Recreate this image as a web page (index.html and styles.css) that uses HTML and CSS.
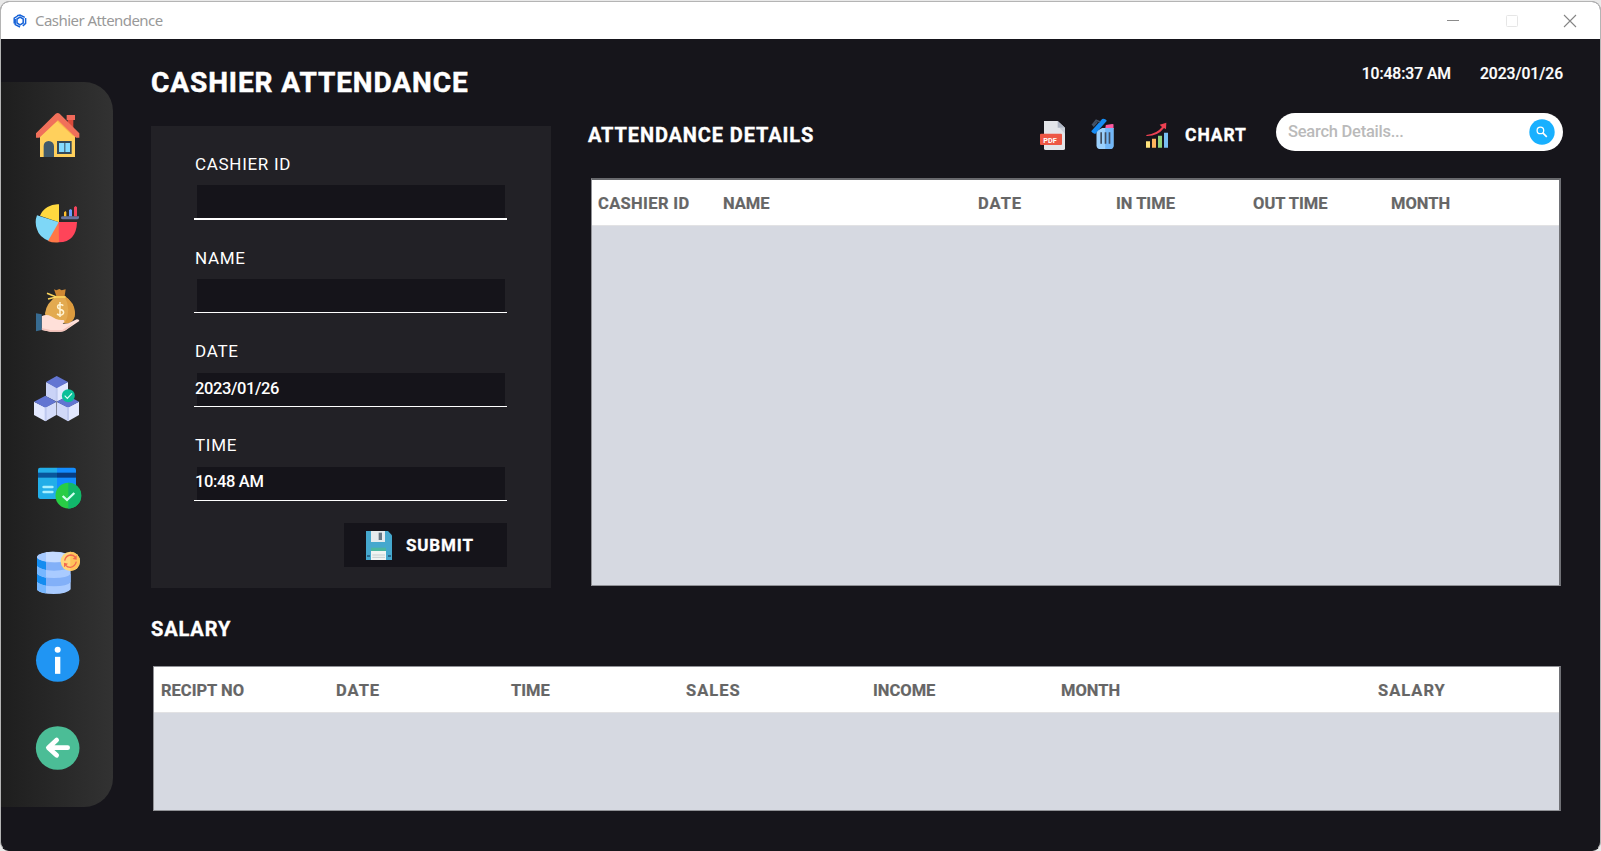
FILE: index.html
```html
<!DOCTYPE html>
<html lang="en">
<head>
<meta charset="utf-8">
<title>Cashier Attendence</title>
<link rel="stylesheet" href="styles.css">
</head>
<body>
<div class="window">
  <header class="titlebar">
    <svg class="app-icon" viewBox="0 0 14 14"><path d="M4.2 1.8 7 1l4.8 2.4M12.6 4v5.4L9.8 12M7 13l-4.8-2.4V5M1.2 9.4V4.2L4.5 2M4 5l3-1.8L10.2 5v4L7 10.8 4 9z" fill="none" stroke="#1763d8" stroke-width="1.5"/></svg>
    <span class="app-name">Cashier Attendence</span>
    <div class="controls">
      <svg viewBox="0 0 12 12"><path d="M0 5.5h12" stroke="#8b8b8b"/></svg>
      <svg viewBox="0 0 12 12"><rect x=".5" y=".5" width="11" height="11" rx="1" fill="none" stroke="#e6e6e6"/></svg>
      <svg viewBox="0 0 12 12"><path d="M0 0l12 12M12 0L0 12" stroke="#858585" stroke-width="1.1"/></svg>
    </div>
  </header>
  <div class="content">
    <nav class="sidebar">
      <svg viewBox="108 69 132 132">
        <path d="M203 88h17v28l-17-16z" fill="#d94a3b"/><path d="M200 75h25v15h-25z" fill="#f0695a"/>
        <path d="M120 132l53-48 52 48v69H120z" fill="#ffd05c"/>
        <path d="M173 92l48 44" stroke="#f9b54c" stroke-width="5"/>
        <path d="M108 130l59-59q6-4 12 0l59 59v13h-10l-54-52-56 52h-10z" fill="#f0705a"/>
        <path d="M131 201v-33q0-14 15-15 15 1 16 15v33z" fill="#40596b"/>
        <path d="M171 153h44v39h-44z" fill="#344a5a"/><path d="M177 159h33v27h-33z" fill="#84dbff"/><path d="M193 158h3v29h-3z" fill="#344a5a"/>
      </svg>
      <svg viewBox="108 332 132 132">
        <path d="M177 396v-54a56 54 0 0 0-57 34z" fill="#ffd93f"/>
        <path d="M177 396v56h-30q-30-12-36-35-8-22 0-42z" fill="#7ed7f7"/>
        <path d="M177 394l-33 58q14 6 33 4z" fill="#ff7847"/>
        <path d="M176 395h55q-2 60-54 61z" fill="#ff4459"/>
        <path d="M183 382q0-4 5-4h49v5q-2 4-6 4h-43q-5 0-5-5z" fill="#69759f"/>
        <path d="M192 378v-12l5-4 2 4v12z" fill="#ffc02d"/><path d="M207 378v-19l5-3 4 3v19z" fill="#6b9eff"/><path d="M222 378v-27l5-4 4 4v27z" fill="#f5445d"/>
      </svg>
      <svg viewBox="108 54 132 132">
        <path d="M171 77q-32 21-36 53 1 24 24 30h45q20-6 21-30-3-33-32-53z" fill="#e3aa50"/>
        <path d="M193 77q32 20 32 53-1 24-21 30h-10q22-40-1-83z" fill="#dc9b3e"/>
        <path d="M162 58l7 3 9-4 7 4 12-3-3 20h-25z" fill="#cf8833"/>
        <path d="M197 81h-28l-28-11M169 81l-25 6" fill="none" stroke="#ffd75e" stroke-width="5"/>
        <path d="M190 107q-8-7-16-1-4 8 5 11l7 3q8 5 3 12-7 7-18 0M180 96v45" fill="none" stroke="#fff4d2" stroke-width="4.5"/>
        <path d="M125 139q15-8 28 0l15 8q9 4 22 3 4 1 3 5l-5 7 17-2 25-12q8-1 8 5l-40 27q-7 5-16 5h-31l-26-5z" fill="#ffe0d9"/>
        <path d="M125 174l26 6h36l35-22-24 22q-8 5-16 5h-31l-26-6z" fill="#f4c4bc"/>
        <path d="M108 130l17 3v47l-17 4z" fill="#376b91"/>
      </svg>
      <svg viewBox="108 317 132 132">
        <path d="M138 335l32 16v43l-32-16z" fill="#cad3f7"/><path d="M170 351l34-16v43l-34 16z" fill="#e2e8ff"/><path d="M138 335l32-18 34 18-34 19z" fill="#6275d2"/>
        <path d="M102 394l34 17v42l-34-19z" fill="#e3e9ff"/><path d="M136 411l33-17v40l-33 19z" fill="#d4dcfa"/><path d="M102 394l34-18 33 18-33 18z" fill="#6275d2"/>
        <path d="M170 394l34 17v42l-34-19z" fill="#d0d8f8"/><path d="M204 411l33-17v40l-33 19z" fill="#e2e8ff"/><path d="M170 394l34-18 33 18-33 18z" fill="#6275d2"/>
        <path d="M137 411v40M204 411v40M170 354v37" stroke="#bfc9ef" stroke-width="6"/>
        <circle cx="205" cy="376" r="19.5" fill="#0bbf99"/><path d="M194 376l8 8 14-15" fill="none" stroke="#e1fff7" stroke-width="3.5"/>
      </svg>
      <svg viewBox="108 40 132 132">
        <path d="M171 54h50q7 0 7 7v87h-57z" fill="#138dff"/><path d="M120 54h51v94h-51q-6-1-6-7V60q0-6 6-6z" fill="#22aee8"/>
        <path d="M114 69h57v15h-57z" fill="#08569b"/><path d="M171 69h57v15h-57z" fill="#073d82"/>
        <path d="M131 112h26M131 127h26" stroke="#a7f0ff" stroke-width="8" stroke-linecap="round"/>
        <circle cx="205" cy="138" r="38.5" fill="#28cd45"/><path d="M205 99a38 38 0 0 1 0 78z" fill="#11b76b"/>
        <path d="M188 139l13 12 22-21" fill="none" stroke="#cffff0" stroke-width="7"/>
      </svg>
      <svg viewBox="108 303 132 132">
        <path d="M111 320q12-15 50-15t51 15v98q-10 14-51 14-39 0-50-13z" fill="#a9cbff"/>
        <path d="M111 323q10 14 51 14 40 0 50-14v25q-10 14-50 14-41 0-51-14zM111 371q10 13 51 13 40 0 50-13v25q-10 13-50 13-41 0-51-13z" fill="#82b0f8"/>
        <path d="M111 323q8 8 27 12v25q-19-4-27-11zM111 371q8 7 27 12v24q-19-4-27-11z" fill="#138cf0"/>
        <path d="M111 349q9 8 27 11v23q-18-4-27-12zM111 397q9 7 27 10v23q-19-3-27-10z" fill="#76b7ff"/>
        <ellipse cx="161" cy="321" rx="50" ry="15" fill="#a6caff"/><path d="M138 307q25-5 53 3v24q-27 6-53 0z" fill="#c5dbff"/>
        <circle cx="211" cy="334" r="29" fill="#ffd67c"/><path d="M211 305a29 29 0 0 1 0 58z" fill="#ffc35a"/>
        <path d="M194 332q3-16 18-17 8 0 14 6M229 335q-4 15-18 17-9 0-14-6" fill="none" stroke="#f2694f" stroke-width="4"/><path d="M230 316v13l-12-2zM192 352v-14l12 3z" fill="#f2694f"/>
      </svg>
      <svg viewBox="108 54.5 132 132"><circle cx="173" cy="121" r="65" fill="#2095f3"/><circle cx="173" cy="90" r="9" fill="#fff"/><path d="M165 111h16v51h-16z" fill="#fff"/></svg>
      <svg viewBox="108 318 132 132"><circle cx="173" cy="384" r="65.5" fill="#4bbd96"/><path d="M170 360l-25 23 25 23M147 383h56" fill="none" stroke="#fff" stroke-width="14" stroke-linecap="round" stroke-linejoin="round"/></svg>
    </nav>
    <main class="main">
      <div class="upper">
        <section class="entry">
          <h1 class="page-title">CASHIER ATTENDANCE</h1>
          <form class="panel">
            <label class="field field-active"><span class="label">CASHIER ID</span><span class="input"></span></label>
            <label class="field"><span class="label">NAME</span><span class="input"></span></label>
            <label class="field field-filled"><span class="label">DATE</span><span class="input">2023/01/26</span></label>
            <label class="field field-filled"><span class="label">TIME</span><span class="input input-time">10:48 AM</span></label>
            <button type="button" class="submit">
              <svg viewBox="678 513 78 87"><path d="M678 513h66l12 13v74h-78z" fill="#45a8ce"/><path d="M693 513h42v33h-42z" fill="#e4ebee"/><path d="M716 518h10v22h-10z" fill="#657784"/><path d="M693 563h45v10h-45z" fill="#4ab7a0"/><path d="M693 573h45v27h-45z" fill="#f0f4f2"/><path d="M697 585h38M697 592h38" stroke="#c4ced0" stroke-width="3"/><path d="M681 585h9v6h-9zM744 585h9v6h-9z" fill="#28698c"/></svg>
              <span>SUBMIT</span>
            </button>
          </form>
        </section>
        <section class="details">
          <div class="clock"><span class="now">10:48:37 AM</span><span class="today">2023/01/26</span></div>
          <div class="toolbar">
            <h2 class="section-title">ATTENDANCE DETAILS</h2>
            <svg class="pdf" viewBox="60 63 75 87"><path d="M72 63h41l22 20v64q-1 3-5 3H77q-5 0-5-4z" fill="#e3e5e9"/><path d="M113 63l22 20h-22z" fill="#aeb5c3"/><path d="M119 84h16v17z" fill="#cbd0da"/><rect x="60" y="101" width="66" height="34" rx="3" fill="#ed5744"/><text class="pdf-text" x="70" y="128">PDF</text></svg>
            <svg class="trash" viewBox="212 57 68 90"><path d="M256 75l19-3 4 1v14h-25z" fill="#ff589f"/><path d="M228 93l17-9h34v54q-1 9-10 9h-32q-8-1-9-10z" fill="#9bd0fc"/><path d="M254 84h25v54q-1 9-10 9h-15z" fill="#72b7f8"/><path d="M242 97v34M255 97v34M267 97v34" stroke="#414e61" stroke-width="5"/><path d="M212 94l33-37q9-2 14 5l-35 40q-8-1-12-8z" fill="#168cf4"/><path d="M215 76l12-15 12 5M218 79l12-13" fill="none" stroke="#435266" stroke-width="5"/></svg>
            <svg class="chart" viewBox="378 65 66 76"><path d="M378 122h12v19h-12z" fill="#ffe27b"/><path d="M396 114h12v27h-12z" fill="#ffb45d"/><path d="M414 105h12v36h-12z" fill="#91d47b"/><path d="M432 96h12v45h-12z" fill="#78bef2"/><path d="M379 103q32-4 47-24l-7-7 20-6-1 20-6-4q-19 25-53 24z" fill="#ed4152"/></svg>
            <span class="chart-label">CHART</span>
            <div class="search"><span>Search Details...</span><svg viewBox="0 0 26 26"><circle cx="13" cy="13" r="12.7" fill="#18b0ff"/><circle cx="11.4" cy="11.4" r="3.3" fill="none" stroke="#fff" stroke-width="1.3"/><path d="M13.8 13.8l4 4" stroke="#fff" stroke-width="1.7"/></svg></div>
          </div>
          <div class="table details-table"><div class="thead details-cols"><span class="semi-wide">CASHIER ID</span><span>NAME</span><span class="wide">DATE</span><span>IN TIME</span><span>OUT TIME</span><span>MONTH</span></div></div>
        </section>
      </div>
      <section class="salary">
        <h2 class="section-title salary-title">SALARY</h2>
        <div class="table salary-table"><div class="thead salary-cols"><span>RECIPT NO</span><span class="wide">DATE</span><span>TIME</span><span class="wide">SALES</span><span>INCOME</span><span>MONTH</span><span class="wide">SALARY</span></div></div>
      </section>
    </main>
  </div>
</div>
</body>
</html>
```
FILE: styles.css
```css
* { box-sizing: border-box; }
body { margin: 0; padding-top: 1px; height: 851px; overflow: hidden; background: #e9e9e9; font-family: Roboto, "Liberation Sans", sans-serif; color: #fff; }
svg { display: block; flex: none; overflow: visible; }
h1, h2 { margin: 0; font-weight: 700; white-space: nowrap; }
span { white-space: nowrap; }
.window { height: 850px; border: 1px solid #b4b4b4; border-bottom-color: #15151a; border-radius: 9px; overflow: hidden; background: #16151b; }
.titlebar { height: 37px; background: #fff; display: flex; align-items: center; padding: 0 24px 0 12px; }
.app-icon { width: 14px; height: 14px; }
.app-name { margin: -2px 0 0 8px; font: 15px/20px "Noto Sans", "Open Sans", sans-serif; letter-spacing: -.55px; color: #999; }
.controls { display: flex; gap: 46.5px; margin-left: auto; }
.controls svg { width: 12px; height: 12px; }
.content { display: flex; height: 811px; }
.sidebar { flex: none; width: 112px; height: 725px; margin-top: 43px; padding: 31px 0 37px 35px; display: flex; flex-direction: column; justify-content: space-between; background: linear-gradient(90deg, #1e1e1e, #323232); border-radius: 0 29px 29px 0; }
.sidebar svg { width: 44px; height: 44px; }
.main { width: 1412px; margin-left: 38px; }
.upper { display: grid; grid-template-columns: 400px 975px; gap: 37px; height: 549px; }
.page-title { line-height: 87px; font-size: 28px; letter-spacing: .92px; -webkit-text-stroke: .5px #fff; }
.panel { height: 462px; padding: 26px 44px 0 43px; background: #222126; display: flex; flex-direction: column; }
.field { flex: none; height: 94px; }
.label { display: block; padding-left: 1px; font-size: 17px; line-height: 24px; letter-spacing: .7px; }
.input { display: block; height: 43px; padding-left: 1px; border-bottom: 1px solid #fff; font-size: 16.5px; font-weight: 500; letter-spacing: -.4px; line-height: 50px; background: linear-gradient(#15141a, #15141a) 3px 9px / 308px 33px no-repeat; }
.input-time { line-height: 48px; letter-spacing: -.35px; }
.field-active .input { height: 44px; border-bottom-width: 2px; }
.field-filled .label { line-height: 22px; padding-bottom: 2px; }
.submit { flex: none; align-self: flex-end; width: 163px; height: 44px; margin-top: -5px; padding: 0 0 0 22px; border: 0; background: #15141a; color: #fff; display: flex; align-items: center; gap: 14px; font: 700 17px/22px Roboto, sans-serif; letter-spacing: .85px; -webkit-text-stroke: .3px #fff; }
.submit svg { width: 26px; height: 29px; }
.clock { height: 74px; padding-right: 1px; display: flex; justify-content: flex-end; gap: 29px; font-size: 15.7px; font-weight: 500; letter-spacing: -.05px; line-height: 70px; -webkit-text-stroke: .2px #fff; }
.today { margin-right: -1px; }
.toolbar { height: 65px; display: flex; align-items: flex-start; }
.section-title { font-size: 20px; line-height: 44px; letter-spacing: .87px; -webkit-text-stroke: .35px #fff; }
.pdf { width: 25px; height: 29px; margin: 8px 0 0 226px; }
.pdf-text { font: 700 22px Roboto, sans-serif; fill: #fff; }
.trash { width: 23px; height: 30px; margin: 6px 0 0 26px; }
.chart { width: 22px; height: 26px; margin: 9px 0 0 32px; }
.chart-label { margin-left: 17px; font-size: 17.5px; font-weight: 700; line-height: 45px; letter-spacing: .9px; -webkit-text-stroke: .3px #fff; }
.search { width: 287px; height: 38px; margin-left: auto; padding: 0 8px 0 12px; border-radius: 19px; background: #fff; color: #bababa; display: flex; align-items: center; justify-content: space-between; font-size: 16.5px; font-weight: 500; letter-spacing: -.25px; }
.search span { line-height: 36px; }
.search svg { width: 26px; height: 26px; }
.table { background: #d6d9e1; border: 1px solid #909196; border-right: 2px solid #707176; }
.thead { background: #fff; border-bottom: 1px solid #e2e2e4; color: #666; font-size: 16.5px; font-weight: 700; display: grid; padding-left: 6px; height: 46px; line-height: 47px; -webkit-text-stroke: .2px #666; }
.semi-wide { letter-spacing: .35px; }
.wide { letter-spacing: 1px; }
.details-table { margin: 0 2px 0 3px; height: 408px; border-top: 2px solid #68696d; }
.details-cols { grid-template-columns: 125px 255px 138px 137px 138px 1fr; }
.salary-title { padding-top: 4px; line-height: 74px; }
.salary-table { margin: 0 2px; height: 145px; }
.salary-cols { grid-template-columns: 175px 175px 175px 187px 188px 317px 1fr; line-height: 48px; padding-left: 7px; }
```
